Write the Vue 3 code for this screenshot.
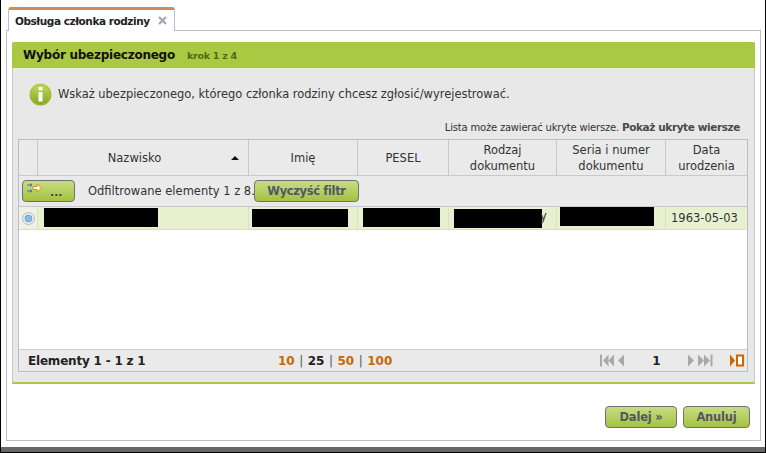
<script setup>
const cols = [
  { key: 'sel', w: 19, label: '' },
  { key: 'n', w: 211, label: 'Nazwisko' },
  { key: 'i', w: 109, label: 'Imię' },
  { key: 'p', w: 91, label: 'PESEL' },
  { key: 'r', w: 108, label: 'Rodzaj dokumentu' },
  { key: 's', w: 109, label: 'Seria i numer dokumentu' },
  { key: 'd', w: 81, label: 'Data urodzenia' }
]
</script>

<template>
  <div class="window">
    <div class="tabs">
      <div class="tab">
        <span>Obsługa członka rodziny</span>
        <svg class="tab-x" width="9" height="9" viewBox="0 0 9 9"><path d="M1 1 8 8M8 1 1 8" stroke="#a4a8ae" stroke-width="2.2"/></svg>
      </div>
    </div>
    <div class="tabpanel">
      <section class="panel">
        <header class="panel-head">
          <h1>Wybór ubezpieczonego</h1>
          <span class="step">krok 1 z 4</span>
        </header>
        <div class="panel-body">
          <div class="info">
            <svg width="23" height="23" viewBox="0 0 23 23">
              <defs>
                <linearGradient id="ig" x1="0" y1="0" x2="0" y2="1">
                  <stop offset="0" stop-color="#c6dc62"/>
                  <stop offset="1" stop-color="#7ea51f"/>
                </linearGradient>
              </defs>
              <circle cx="11.5" cy="11.5" r="11" fill="url(#ig)"/>
              <circle cx="11.5" cy="11.5" r="10" fill="none" stroke="#9cc036" stroke-width="1"/>
              <rect x="9.5" y="4" width="4" height="3.5" rx="1" fill="#fff"/>
              <rect x="9.5" y="9" width="4" height="9.5" rx="0.5" fill="#fff"/>
            </svg>
            <span>Wskaż ubezpieczonego, którego członka rodziny chcesz zgłosić/wyrejestrować.</span>
          </div>
          <div class="hidden-note">Lista może zawierać ukryte wiersze. <b>Pokaż ukryte wiersze</b></div>

          <div class="grid">
            <div class="grid-head">
              <div v-for="c in cols" :key="c.key" class="hcell" :class="'c-' + c.key" :style="{ width: c.w + 'px' }">
                <span>{{ c.label }}</span>
                <i v-if="c.key === 'n'" class="caret"></i>
              </div>
            </div>
            <div class="filter-row">
              <button class="btn btn-filter" type="button">
                <svg class="filter-icon" width="16" height="10" viewBox="0 0 16 10">
                  <path d="M0 2h5M0 8h5" stroke="#3a6fb5" stroke-width="1"/>
                  <path d="M3 .5 5 2 3 3.5M3 6.5 5 8 3 9.5" fill="none" stroke="#3a6fb5" stroke-width="1"/>
                  <path d="M6 3.5h4V1l5 4-5 4V6.5H6z" fill="#fff6cf" stroke="#cf9528" stroke-width="1"/>
                </svg>
                <span class="dots">...</span>
              </button>
              <span class="filter-text">Odfiltrowane elementy 1 z 8.</span>
              <button class="btn btn-clear" type="button">Wyczyść filtr</button>
            </div>
            <div class="row">
              <div class="cell cell-sel" style="width:19px">
                <span class="radio"></span>
              </div>
              <div class="cell" style="width:211px"><div class="mask m-n"></div></div>
              <div class="cell" style="width:109px"><div class="mask m-i"></div></div>
              <div class="cell" style="width:91px"><div class="mask m-p"></div></div>
              <div class="cell" style="width:108px"><div class="mask m-r"></div><span class="peek">y</span></div>
              <div class="cell" style="width:109px"><div class="mask m-s"></div></div>
              <div class="cell cell-date" style="width:81px">1963-05-03</div>
            </div>
            <div class="grid-empty"></div>
            <footer class="grid-foot">
              <span class="count">Elementy 1 - 1 z 1</span>
              <span class="sizes">
                <a>10</a><em>|</em><b>25</b><em>|</em><a>50</a><em>|</em><a>100</a>
              </span>
              <span class="pager">
                <svg width="25" height="13" viewBox="0 0 25 13" fill="#a9a9a9">
                  <rect x="0" y="0.5" width="2" height="12"/>
                  <path d="M8.5 .5v12L3 6.5zM14 .5v12L8.5 6.5zM24 .5v12l-6-6z"/>
                </svg>
                <b class="page">1</b>
                <svg width="25" height="13" viewBox="0 0 25 13" fill="#a9a9a9">
                  <rect x="22.5" y="0.5" width="2" height="12"/>
                  <path d="M0 .5v12l6-6zM10 .5v12l6-6zM16 .5v12l6-6z"/>
                </svg>
                <svg class="refresh" width="14" height="13" viewBox="0 0 14 13">
                  <path d="M0 .5v12l5-6z" fill="#cc6600"/>
                  <rect x="7" y="1.5" width="6" height="10" fill="#fff" stroke="#cc6600" stroke-width="2"/>
                </svg>
              </span>
            </footer>
          </div>
        </div>
      </section>
      <div class="actions">
        <button class="btn btn-act btn-next" type="button">Dalej »</button>
        <button class="btn btn-act btn-cancel" type="button">Anuluj</button>
      </div>
    </div>
    <div class="shade"></div>
  </div>
</template>

<style>
html, body { margin: 0; background: #fff; }
</style>

<style scoped>
.window {
  box-sizing: border-box;
  width: 766px;
  height: 453px;
  background: #fff;
  border-left: 1px solid #000;
  border-right: 1px solid #000;
  border-bottom: 1px solid #000;
  font-family: "DejaVu Sans", Verdana, sans-serif;
  font-size: 11.5px;
  color: #333;
  overflow: hidden;
  display: flex;
  flex-direction: column;
}
.tabs {
  height: 31px;
  box-sizing: border-box;
  padding: 7px 0 0 7px;
  position: relative;
  z-index: 1;
  flex: none;
}
.tab {
  box-sizing: border-box;
  width: 167px;
  height: 24px;
  background: #fff;
  border: 1px solid #b8bfca;
  border-top: 3px solid #d2895a;
  border-bottom: 0;
  border-radius: 3px 3px 0 0;
  display: flex;
  align-items: center;
  padding: 0 0 0 6px;
  font-weight: bold;
  font-size: 10.5px;
  letter-spacing: -0.45px;
  color: #222;
  white-space: nowrap;
}
.tab-x { margin-left: 8px; }
.tabpanel {
  box-sizing: border-box;
  margin: -1px 4px 0 5px;
  height: 411px;
  flex: none;
  border: 1px solid #b8bfca;
  padding: 11px 5px 0 5px;
  display: flex;
  flex-direction: column;
}
.panel {
  box-sizing: border-box;
  height: 342px;
  flex: none;
  border-left: 1px solid #c8c8c8;
  border-right: 1px solid #c8c8c8;
  border-bottom: 2px solid #a9c943;
  background: #e8e8e8;
  display: flex;
  flex-direction: column;
}
.panel-head {
  margin: 0 -1px;
  height: 26px;
  background: #a9c943;
  border-radius: 3px 3px 0 0;
  display: flex;
  align-items: center;
  padding-left: 11px;
  flex: none;
}
.panel-head h1 {
  margin: 0;
  font-size: 12px;
  letter-spacing: -0.25px;
  font-weight: bold;
  color: #111;
}
.step {
  margin-left: 12px;
  font-size: 9.5px;
  letter-spacing: -0.25px;
  font-weight: bold;
  color: #4f6a14;
}
.panel-body {
  flex: 1;
  padding: 14px 6px 0 5px;
  display: flex;
  flex-direction: column;
}
.info {
  display: flex;
  align-items: center;
  gap: 6px;
  padding-left: 11px;
  height: 24px;
  font-size: 11.45px;
  color: #333;
}
.hidden-note {
  margin-top: 13px;
  height: 16px;
  line-height: 16px;
  padding-right: 8px;
  text-align: right;
  font-size: 10px;
  letter-spacing: -0.2px;
  color: #333;
}
.hidden-note b { color: #4a4a4a; font-size: 10.5px; letter-spacing: -0.4px; }
.grid {
  box-sizing: border-box;
  margin-top: 4px;
  width: 730px;
  height: 233px;
  border: 1px solid #b8bfca;
  display: flex;
  flex-direction: column;
  background: #fff;
}
.grid-head {
  display: flex;
  height: 35px;
  flex: none;
  background: #eaeaea;
  border-bottom: 1px solid #c9c9c9;
}
.hcell {
  box-sizing: border-box;
  border-right: 1px solid #c9c9c9;
  display: flex;
  align-items: center;
  justify-content: center;
  text-align: center;
  line-height: 16px;
  padding: 0 8px;
  color: #333;
}
.c-sel { padding: 0; }
.c-d { border-right: 0; }
.c-n { position: relative; padding-right: 25px; }
.caret {
  position: absolute;
  right: 9px;
  top: 16px;
  width: 0;
  height: 0;
  border-left: 4px solid transparent;
  border-right: 4px solid transparent;
  border-bottom: 4px solid #111;
}
.filter-row {
  flex: none;
  height: 30px;
  background: #eaeaea;
  border-bottom: 1px solid #c9c9c9;
  display: flex;
  align-items: center;
  padding-left: 3px;
}
.btn {
  box-sizing: border-box;
  border: 1px solid #707070;
  border-radius: 4px;
  background: linear-gradient(#c9dc83, #a3c33f);
  font-family: inherit;
  color: #555566;
  font-weight: bold;
  padding: 0;
  display: inline-flex;
  align-items: center;
  justify-content: center;
}
.btn-filter {
  width: 53px;
  height: 22px;
  justify-content: flex-start;
  padding-left: 4px;
}
.filter-icon { margin-top: -7px; }
.dots { margin-left: 7px; font-size: 11px; color: #444; padding-top: 3px; }
.filter-text { margin-left: 13px; width: 166px; white-space: nowrap; }
.btn-clear { width: 105px; height: 22px; font-size: 11.5px; letter-spacing: -0.35px; }
.row {
  flex: none;
  display: flex;
  height: 23px;
  box-sizing: border-box;
  background: #e7f0cf;
  border-bottom: 1px solid #dcdcc8;
}
.cell {
  box-sizing: border-box;
  border-right: 1px solid #e2dccb;
  position: relative;
  overflow: hidden;
}
.cell-sel {
  background: #eef1e4;
  display: flex;
  align-items: center;
  justify-content: center;
}
.radio {
  box-sizing: border-box;
  width: 13px;
  height: 13px;
  border-radius: 50%;
  background: radial-gradient(circle, #8dbbe2 0 2.5px, #6a9fd0 3.5px, #e6edf3 4.2px);
  border: 1px solid #b5bcc4;
}
.cell-date { border-right: 0; padding-left: 5px; line-height: 22px; white-space: nowrap; color: #333; }
.mask { background: #000; position: absolute; }
.m-n { left: 6px; top: 1px; width: 114px; height: 19px; }
.m-i { left: 3px; top: 2px; width: 96px; height: 18px; }
.m-p { left: 5px; top: 1px; width: 77px; height: 19px; }
.m-r { left: 5px; top: 2px; width: 88px; height: 19px; }
.m-s { left: 3px; top: 0; width: 94px; height: 19px; }
.peek { position: absolute; left: 91px; top: 2px; }
.grid-empty { flex: 1; background: #fff; }
.grid-foot {
  flex: none;
  height: 22px;
  box-sizing: border-box;
  border-top: 1px solid #d0d0d0;
  background: #eaeaea;
  display: flex;
  align-items: center;
  padding-left: 9px;
}
.count { flex: none; width: 250px; font-weight: bold; color: #222; font-size: 12px; letter-spacing: -0.2px; white-space: nowrap; }
.sizes { flex: none; display: flex; align-items: center; font-weight: bold; font-size: 12px; width: 114px; white-space: nowrap; }
.sizes a { color: #cc6600; }
.sizes b { color: #222; }
.sizes em { font-style: normal; font-weight: normal; color: #555; margin: 0 4.5px; }
.pager { flex: none; margin-left: 208px; display: flex; align-items: center; }
.page { width: 63px; text-align: center; color: #222; font-size: 12px; }
.refresh { margin-left: 17px; }
.actions {
  display: flex;
  justify-content: flex-end;
  gap: 6px;
  margin-top: 22px;
  padding-right: 5px;
}
.btn-act { height: 22px; font-size: 11.5px; letter-spacing: -0.2px; }
.btn-next { width: 72px; }
.btn-cancel { width: 67px; }
.shade {
  margin-top: 6px;
  height: 5px;
  background: #666865;
  flex: none;
}
</style>
